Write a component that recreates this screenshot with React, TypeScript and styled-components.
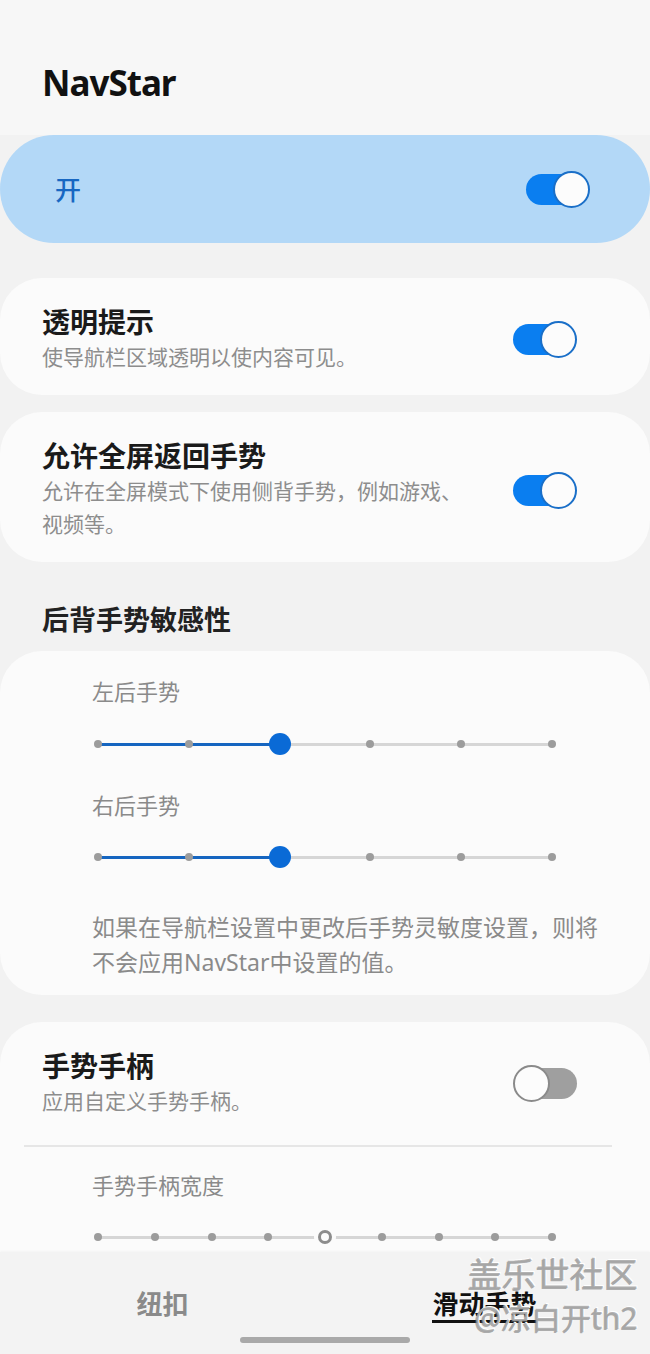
import React from "react";
import styled, { createGlobalStyle } from "styled-components";

const GlobalStyle = createGlobalStyle`
    html, body {
        margin: 0;
        padding: 0;
        background: #f2f2f2;
    }
    body {
        font-family: "Noto Sans", "Noto Sans CJK SC", sans-serif;
    }
    * {
        box-sizing: border-box;
    }
`;

const Page = styled.div`
    width: 650px;
    height: 1354px;
    display: flex;
    flex-direction: column;
    background: #f2f2f2;
    overflow: hidden;
`;

const Header = styled.header`
    height: 135px;
    flex-shrink: 0;
    display: flex;
    align-items: center;
    padding: 30px 0 0 42px;
    background: #f7f7f7;
`;

const Title = styled.h1`
    margin: 0;
    font-size: 35px;
    font-weight: 700;
    color: #111;
    letter-spacing: -1px;
`;

const Content = styled.main`
    flex: 1;
    overflow: hidden;
    display: flex;
    flex-direction: column;
`;

const MasterCard = styled.div`
    height: 108px;
    flex-shrink: 0;
    display: flex;
    align-items: center;
    justify-content: space-between;
    padding: 0 60px 0 55px;
    border-radius: 54px;
    background: #b3d8f7;
`;

const MasterLabel = styled.span`
    font-size: 26px;
    font-weight: 500;
    color: #1767c2;
`;

const Card = styled.section<{ $gap?: number }>`
    flex-shrink: 0;
    margin-top: ${(p) => p.$gap ?? 0}px;
    background: #fbfbfb;
    border-radius: 42px;
`;

const SwitchRow = styled.div<{ $bottom?: number }>`
    display: flex;
    align-items: center;
    gap: 44px;
    padding: 27px 73px ${(p) => p.$bottom ?? 21}px 42px;
`;

const RowText = styled.div`
    flex: 1;
    min-width: 0;
    display: flex;
    flex-direction: column;
`;

const RowTitle = styled.div`
    font-size: 28px;
    line-height: 34px;
    font-weight: 700;
    color: #1a1a1a;
`;

const RowSub = styled.div`
    margin-top: 2px;
    font-size: 21px;
    line-height: 33px;
    color: #8d8d8d;
`;

const ToggleBox = styled.div`
    position: relative;
    width: 64px;
    height: 37px;
    flex-shrink: 0;
`;

const ToggleTrack = styled.div<{ $on: boolean }>`
    position: absolute;
    top: 3px;
    bottom: 3px;
    left: ${(p) => (p.$on ? 0 : 14)}px;
    right: ${(p) => (p.$on ? 14 : 0)}px;
    border-radius: 16px;
    background: ${(p) => (p.$on ? "#0a7ef0" : "#9f9f9f")};
`;

const ToggleKnob = styled.div<{ $on: boolean }>`
    position: absolute;
    top: 0;
    left: ${(p) => (p.$on ? 27 : 0)}px;
    width: 37px;
    height: 37px;
    border-radius: 50%;
    background: #fcfcfc;
    border: ${(p) => (p.$on ? "2px solid #1a6fc8" : "2px solid #8a8a8a")};
`;

const SectionTitle = styled.h2`
    margin: 40px 0 13px 42px;
    font-size: 27px;
    line-height: 36px;
    font-weight: 700;
    color: #222;
`;

const SliderCard = styled.div`
    padding: 24px 48px 15px 92px;
`;

const SliderLabel = styled.div<{ $top?: number }>`
    margin-top: ${(p) => p.$top ?? 0}px;
    font-size: 22px;
    line-height: 32px;
    color: #8a8a8a;
`;

const SliderBox = styled.div<{ $top: number }>`
    position: relative;
    width: 454px;
    height: 24px;
    margin: ${(p) => p.$top}px 0 0 6px;
`;

const TrackLine = styled.div<{ $active?: boolean }>`
    position: absolute;
    top: 10.5px;
    height: 3px;
    background: ${(p) => (p.$active ? "#1565c0" : "#d6d6d6")};
`;

const Stop = styled.div`
    position: absolute;
    top: 8px;
    width: 8px;
    height: 8px;
    margin-left: -4px;
    border-radius: 50%;
    background: #9c9c9c;
`;

const Thumb = styled.div<{ $hollow?: boolean }>`
    position: absolute;
    top: ${(p) => (p.$hollow ? 5 : 1)}px;
    width: ${(p) => (p.$hollow ? 14 : 22)}px;
    height: ${(p) => (p.$hollow ? 14 : 22)}px;
    margin-left: ${(p) => (p.$hollow ? -7 : -11)}px;
    border-radius: 50%;
    background: ${(p) => (p.$hollow ? "#fbfbfb" : "#0a6ad6")};
    border: ${(p) => (p.$hollow ? "3px solid #8c8c8c" : "none")};
    box-shadow: ${(p) => (p.$hollow ? "0 0 0 4px #fbfbfb" : "none")};
`;

const Note = styled.p`
    margin: 41px 0 0;
    font-size: 23px;
    line-height: 35px;
    color: #8a8a8a;
`;

const Divider = styled.hr`
    margin: 0 38px 0 24px;
    border: none;
    border-top: 2px solid #e6e6e6;
`;

const HandleSection = styled.div`
    padding: 22px 48px 60px 92px;
`;

const Nav = styled.nav`
    position: relative;
    height: 102px;
    flex-shrink: 0;
    display: flex;
    flex-direction: column;
    align-items: center;
    padding-top: 36px;
    background: #f3f3f3;
    box-shadow: 0 -1px 2px rgba(0, 0, 0, 0.03);
`;

const Tabs = styled.div`
    width: 100%;
    display: grid;
    grid-template-columns: 1fr 1fr;
    justify-items: center;
`;

const Tab = styled.div<{ $active?: boolean }>`
    font-size: 26px;
    line-height: 32px;
    font-weight: 700;
    color: ${(p) => (p.$active ? "#111" : "#8a8a8a")};
    border-bottom: 3px solid ${(p) => (p.$active ? "#111" : "transparent")};
    margin-left: ${(p) => (p.$active ? -6 : 0)}px;
`;

const HomeBar = styled.div`
    width: 170px;
    height: 6px;
    margin-top: 14px;
    border-radius: 3px;
    background: #a9a9a9;
`;

const Watermark = styled.div`
    position: absolute;
    right: 12px;
    top: 1px;
    display: flex;
    flex-direction: column;
    align-items: flex-end;
    pointer-events: none;
`;

const MarkLine = styled.span<{ $size: number; $h: number }>`
    font-size: ${(p) => p.$size}px;
    line-height: ${(p) => p.$h}px;
    color: rgba(165, 165, 165, 0.85);
    text-shadow: -1px 1px 0 rgba(110, 110, 110, 0.55), 1px -1px 0 #ffffff;
`;

function Toggle({ on }: { on: boolean }) {
    return (
        <ToggleBox>
            <ToggleTrack $on={on} />
            <ToggleKnob $on={on} />
        </ToggleBox>
    );
}

interface SliderProps {
    stops: number
    value: number
    top: number
    hollow?: boolean
}

function Slider({ stops, value, top, hollow }: SliderProps) {
    const pct = (value / (stops - 1)) * 100;
    return (
        <SliderBox $top={top}>
            <TrackLine style={{ left: 0, right: 0 }} />
            {!hollow && <TrackLine $active style={{ left: 0, width: `${pct}%` }} />}
            {Array.from({ length: stops }).map((_, i) => (
                <Stop key={i} style={{ left: `${(i / (stops - 1)) * 100}%` }} />
            ))}
            <Thumb $hollow={hollow} style={{ left: `${pct}%` }} />
        </SliderBox>
    );
}

export default function App() {
    return (
        <Page>
            <GlobalStyle />
            <Header>
                <Title>NavStar</Title>
            </Header>
            <Content>
                <MasterCard>
                    <MasterLabel>开</MasterLabel>
                    <Toggle on />
                </MasterCard>

                <Card $gap={35}>
                    <SwitchRow>
                        <RowText>
                            <RowTitle>透明提示</RowTitle>
                            <RowSub>使导航栏区域透明以使内容可见。</RowSub>
                        </RowText>
                        <Toggle on />
                    </SwitchRow>
                </Card>

                <Card $gap={17}>
                    <SwitchRow>
                        <RowText>
                            <RowTitle>允许全屏返回手势</RowTitle>
                            <RowSub>允许在全屏模式下使用侧背手势，例如游戏、视频等。</RowSub>
                        </RowText>
                        <Toggle on />
                    </SwitchRow>
                </Card>

                <SectionTitle>后背手势敏感性</SectionTitle>

                <Card>
                    <SliderCard>
                        <SliderLabel>左后手势</SliderLabel>
                        <Slider stops={6} value={2} top={25} />
                        <SliderLabel $top={33}>右后手势</SliderLabel>
                        <Slider stops={6} value={2} top={24} />
                        <Note>如果在导航栏设置中更改后手势灵敏度设置，则将不会应用NavStar中设置的值。</Note>
                    </SliderCard>
                </Card>

                <Card $gap={27}>
                    <SwitchRow $bottom={27}>
                        <RowText>
                            <RowTitle>手势手柄</RowTitle>
                            <RowSub>应用自定义手势手柄。</RowSub>
                        </RowText>
                        <Toggle on={false} />
                    </SwitchRow>
                    <Divider />
                    <HandleSection>
                        <SliderLabel>手势手柄宽度</SliderLabel>
                        <Slider stops={9} value={4} top={24} hollow />
                    </HandleSection>
                </Card>
            </Content>
            <Nav>
                <Tabs>
                    <Tab>纽扣</Tab>
                    <Tab $active>滑动手势</Tab>
                </Tabs>
                <HomeBar />
                <Watermark>
                    <MarkLine $size={34} $h={42}>盖乐世社区</MarkLine>
                    <MarkLine $size={30} $h={46}>@凉白开th2</MarkLine>
                </Watermark>
            </Nav>
        </Page>
    );
}
